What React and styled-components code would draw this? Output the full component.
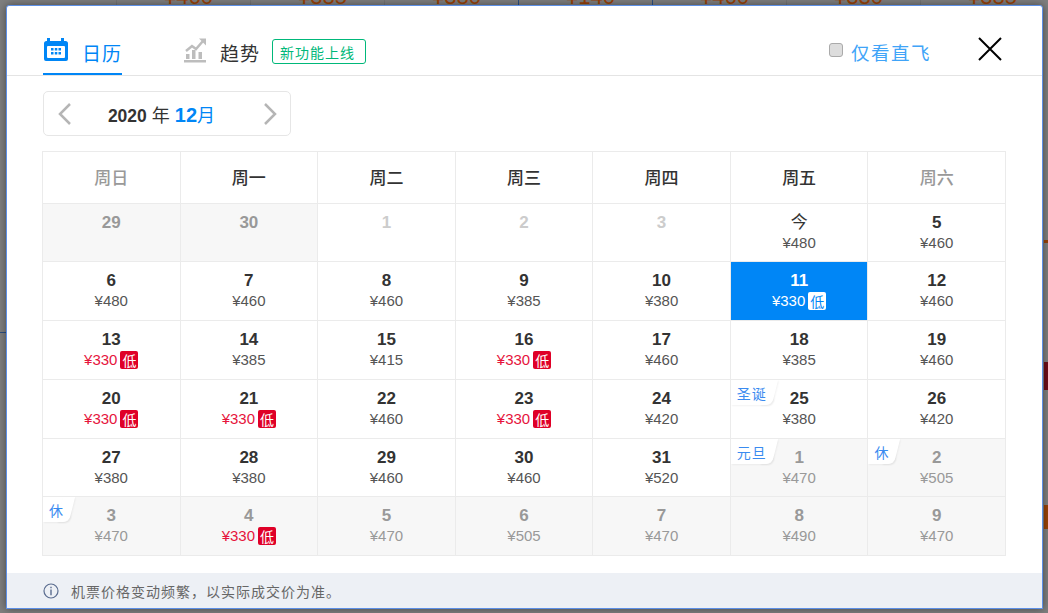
import React from "react";
import styled, { createGlobalStyle } from "styled-components";

const Global = createGlobalStyle`
  html, body {
    margin: 0;
    padding: 0;
    height: 100%;
    overflow: hidden;
    background: #7f7f7f;
    font-family: "Liberation Sans", "Noto Sans CJK SC", sans-serif;
  }
`;

const Page = styled.div`
  position: relative;
  width: 1048px;
  height: 613px;
  overflow: hidden;
  background: #7f7f7f;
`;

const PriceStrip = styled.div`
  display: flex;
  margin-left: -17px;
  margin-top: -12px;
`;

const StripCell = styled.div`
  flex: 0 0 134px;
  height: 18px;
  padding-left: 47px;
  box-sizing: border-box;
  border-right: 1px solid ${(p) => (p.$blue ? "#2c4f80" : "#747474")};
  font-size: 22px;
  line-height: 18px;
  color: #9a4208;
`;

const Scrap = styled.div`
  position: absolute;
  left: ${(p) => p.$x}px;
  top: ${(p) => p.$y}px;
  width: ${(p) => p.$w}px;
  height: ${(p) => p.$h}px;
  background: ${(p) => p.$c};
`;

const Modal = styled.div`
  position: absolute;
  left: 6px;
  top: 5px;
  width: 1037px;
  height: 604px;
  box-sizing: border-box;
  display: flex;
  flex-direction: column;
  background: #fff;
  border: 1px solid #5c8fe6;
  border-radius: 3px 3px 0 0;
  box-shadow: 0 0 8px rgba(0, 0, 0, 0.45);
`;

const Header = styled.div`
  height: 70px;
  box-sizing: border-box;
  flex: none;
  display: flex;
  align-items: flex-end;
  padding: 0 35px 0 36px;
  border-bottom: 1px solid #e4e4e4;
`;

const Tab = styled.div`
  display: flex;
  align-items: center;
  height: 44px;
  box-sizing: border-box;
  margin-right: ${(p) => p.$gap || 0}px;
  font-size: 19px;
  letter-spacing: 1px;
  color: ${(p) => (p.$active ? "#0086f6" : "#333")};
  border-bottom: 2px solid ${(p) => (p.$active ? "#0086f6" : "transparent")};
`;

const TabIcon = styled.svg`
  width: 26px;
  height: 26px;
  flex: none;
  margin-right: ${(p) => p.$gap}px;
  margin-bottom: 4px;
`;

const NewBadge = styled.span`
  margin-left: 12px;
  margin-bottom: 1px;
  height: 25px;
  box-sizing: border-box;
  padding: 0 10px 0 7px;
  display: flex;
  align-items: center;
  font-size: 14px;
  letter-spacing: 1px;
  color: #00b87a;
  border: 1px solid #00b87a;
  border-radius: 3px;
`;

const DirectOnly = styled.label`
  margin-left: auto;
  display: flex;
  align-items: center;
  height: 44px;
  padding-bottom: 3px;
  box-sizing: border-box;
  font-size: 18.5px;
  letter-spacing: 1.5px;
  color: #40a4f8;
`;

const Check = styled.input`
  appearance: none;
  width: 14px;
  height: 14px;
  margin: 0 8px 3px 0;
  background: #ddd;
  border: 1px solid #aaa;
  border-radius: 3px;
`;

const CloseIcon = styled.svg`
  width: 24px;
  height: 24px;
  margin-left: 47px;
  margin-bottom: 14px;
  margin-right: 5px;
  flex: none;
`;

const Body = styled.div`
  padding: 15px 36px 0 35px;
`;

const MonthBar = styled.div`
  width: 248px;
  height: 45px;
  margin-left: 1px;
  box-sizing: border-box;
  padding: 0 12px 0 13px;
  display: flex;
  align-items: center;
  justify-content: space-between;
  border: 1px solid #e6e6e6;
  border-radius: 5px;
`;

const Chevron = styled.svg`
  width: 15px;
  height: 24px;
  flex: none;
`;

const MonthLabel = styled.div`
  display: flex;
  align-items: baseline;
  margin-right: 12px;
  font-size: 18px;
  color: #333;
  white-space: pre;
`;

const Year = styled.b`
  font-size: 17.5px;
`;

const Month = styled.span`
  color: #0086f6;
  font-size: 18px;
  b {
    font-size: 20px;
  }
`;

const Grid = styled.div`
  margin-top: 15px;
  width: 964px;
  height: 405px;
  box-sizing: border-box;
  display: grid;
  grid-template-columns: repeat(7, 1fr);
  grid-template-rows: 52px 58px 59px 59px 59px 58px 59px;
  border-top: 1px solid #ebebeb;
  border-left: 1px solid #ebebeb;
`;

const WeekCell = styled.div`
  display: flex;
  align-items: center;
  justify-content: center;
  padding-bottom: 3px;
  border-right: 1px solid #ebebeb;
  border-bottom: 1px solid #ebebeb;
  font-size: 17px;
  font-weight: 500;
  color: ${(p) => (p.$weekend ? "#999" : "#333")};
`;

const tones = {
  normal: { bg: "#fff", day: "#333", price: "#555" },
  past: { bg: "#f7f7f7", day: "#999", price: "#999" },
  gone: { bg: "#fff", day: "#ccc", price: "#ccc" },
  next: { bg: "#f7f7f7", day: "#999", price: "#999" },
  selected: { bg: "#0086f6", day: "#fff", price: "#fff" },
};

const DayCell = styled.div`
  position: relative;
  display: flex;
  flex-direction: column;
  align-items: center;
  padding-top: 7px;
  box-sizing: border-box;
  border-right: 1px solid #ebebeb;
  border-bottom: 1px solid #ebebeb;
  background: ${(p) => tones[p.$tone].bg};
`;

const Day = styled.div`
  height: 22px;
  line-height: 23px;
  font-size: 17px;
  font-weight: ${(p) => (p.$today ? 400 : 700)};
  color: ${(p) => tones[p.$tone].day};
`;

const Price = styled.div`
  display: flex;
  align-items: center;
  height: 19px;
  font-size: 15px;
  color: ${(p) => (p.$low && p.$tone !== "selected" ? "#e6143c" : tones[p.$tone].price)};
`;

const LowBadge = styled.span`
  margin: 1px 0 0 3px;
  width: 18px;
  height: 18px;
  display: flex;
  align-items: center;
  justify-content: center;
  font-size: 14px;
  border-radius: 2px;
  color: ${(p) => (p.$tone === "selected" ? "#0086f6" : "#fff")};
  background: ${(p) => (p.$tone === "selected" ? "#fff" : "#df0027")};
`;

const HolidayTag = styled.span`
  position: absolute;
  left: 0;
  top: 0;
  height: 25px;
  padding: 0 6px;
  display: flex;
  align-items: center;
  font-size: 14px;
  letter-spacing: 1px;
  color: #3a8bf0;
  background: #fff;
  border-bottom-right-radius: 6px;
  box-shadow: 1px 1px 2px rgba(0, 0, 0, 0.05);

  &::after {
    content: "";
    position: absolute;
    top: 0;
    bottom: 0;
    right: -2px;
    width: 12px;
    background: #fff;
    transform: skewX(-14deg);
    border-bottom-right-radius: 6px;
    box-shadow: 1px 1px 2px rgba(0, 0, 0, 0.05);
  }

  em {
    position: relative;
    z-index: 1;
    font-style: normal;
  }
`;

const Footer = styled.div`
  margin-top: auto;
  height: 35px;
  flex: none;
  display: flex;
  align-items: center;
  padding-left: 36px;
  background: #edf0f5;
  font-size: 14px;
  letter-spacing: 1px;
  color: #666;
`;

const InfoIcon = styled.svg`
  width: 16px;
  height: 16px;
  margin-right: 12px;
  flex: none;
`;

const weekdays = ["周日", "周一", "周二", "周三", "周四", "周五", "周六"];

const days = [
  { d: "29", tone: "past" },
  { d: "30", tone: "past" },
  { d: "1", tone: "gone" },
  { d: "2", tone: "gone" },
  { d: "3", tone: "gone" },
  { d: "今", p: 480, today: true },
  { d: "5", p: 460 },
  { d: "6", p: 480 },
  { d: "7", p: 460 },
  { d: "8", p: 460 },
  { d: "9", p: 385 },
  { d: "10", p: 380 },
  { d: "11", p: 330, low: true, tone: "selected" },
  { d: "12", p: 460 },
  { d: "13", p: 330, low: true },
  { d: "14", p: 385 },
  { d: "15", p: 415 },
  { d: "16", p: 330, low: true },
  { d: "17", p: 460 },
  { d: "18", p: 385 },
  { d: "19", p: 460 },
  { d: "20", p: 330, low: true },
  { d: "21", p: 330, low: true },
  { d: "22", p: 460 },
  { d: "23", p: 330, low: true },
  { d: "24", p: 420 },
  { d: "25", p: 380, tag: "圣诞" },
  { d: "26", p: 420 },
  { d: "27", p: 380 },
  { d: "28", p: 380 },
  { d: "29", p: 460 },
  { d: "30", p: 460 },
  { d: "31", p: 520 },
  { d: "1", p: 470, tone: "next", tag: "元旦" },
  { d: "2", p: 505, tone: "next", tag: "休" },
  { d: "3", p: 470, tone: "next", tag: "休" },
  { d: "4", p: 330, low: true, tone: "next" },
  { d: "5", p: 470, tone: "next" },
  { d: "6", p: 505, tone: "next" },
  { d: "7", p: 470, tone: "next" },
  { d: "8", p: 490, tone: "next" },
  { d: "9", p: 470, tone: "next" },
];

const stripPrices = ["", "¥460", "¥385", "¥380", "¥140", "¥460", "¥330", "¥385"];

const App = () => {
  return (
    <Page>
      <Global />
      <PriceStrip>
        {stripPrices.map((price, i) => (
          <StripCell key={i} $blue={i === 3 || i === 4}>
            {price}
          </StripCell>
        ))}
      </PriceStrip>
      <Scrap $x={0} $y={332} $w={6} $h={1} $c="#2c4f80" />
      <Scrap $x={1044} $y={362} $w={4} $h={28} $c="#6e0c18" />
      <Scrap $x={1044} $y={505} $w={4} $h={24} $c="#9a4208" />
      <Scrap $x={1044} $y={240} $w={4} $h={3} $c="#9a4208" />

      <Modal>
        <Header>
          <Tab $active $gap={60}>
            <TabIcon $gap={13} viewBox="0 0 26 26">
              <path
                fill="#0086f6"
                d="M4 1h3v3h11V1h3v3h1.500A2.500 2.500 0 0 1 25 6.500V22a2 2 0 0 1-2 2H3a2 2 0 0 1-2-2V6.500A2.500 2.500 0 0 1 3.500 4H4z"
              />
              <rect x="4" y="9" width="18" height="12" rx="1" fill="#fff" />
              <path
                fill="#0086f6"
                d="M8 11h2.500v2.500H8zM11.800 11h2.500v2.500h-2.500zM15.500 11H18v2.500h-2.500zM8 15h2.500v2.500H8zM11.800 15h2.500v2.500h-2.500zM15.500 15H18v2.500h-2.500z"
              />
            </TabIcon>
            日历
          </Tab>
          <Tab>
            <TabIcon $gap={12} viewBox="0 0 26 26">
              <path
                fill="#bdbdbd"
                d="M2 23h22v2.500H2zM4 17h3.500v5H4zM10 13h3.500v9H10zM16.500 15H20v7h-3.500z"
              />
              <path fill="none" stroke="#bdbdbd" strokeWidth="2.500" d="M4 14l6-5 4 3 7-8" />
              <path fill="#bdbdbd" d="M17 1.500h7v7z" />
            </TabIcon>
            趋势
            <NewBadge>新功能上线</NewBadge>
          </Tab>
          <DirectOnly>
            <Check type="checkbox" readOnly />
            仅看直飞
          </DirectOnly>
          <CloseIcon viewBox="0 0 24 24">
            <path stroke="#000" strokeWidth="2" d="M1 1l22 22M23 1L1 23" />
          </CloseIcon>
        </Header>

        <Body>
          <MonthBar>
            <Chevron viewBox="0 0 15 24">
              <path fill="none" stroke="#b5b5b5" strokeWidth="2.500" d="M13 2L3 12l10 10" />
            </Chevron>
            <MonthLabel>
              <Year>2020</Year> 年 <Month><b>12</b>月</Month>
            </MonthLabel>
            <Chevron viewBox="0 0 15 24">
              <path fill="none" stroke="#b5b5b5" strokeWidth="2.500" d="M2 2l10 10L2 22" />
            </Chevron>
          </MonthBar>

          <Grid>
            {weekdays.map((w, i) => (
              <WeekCell key={w} $weekend={i === 0 || i === 6}>
                {w}
              </WeekCell>
            ))}
            {days.map((item, i) => {
              const tone = item.tone || "normal";
              return (
                <DayCell key={i} $tone={tone}>
                  {item.tag && (
                    <HolidayTag>
                      <em>{item.tag}</em>
                    </HolidayTag>
                  )}
                  <Day $tone={tone} $today={item.today}>
                    {item.d}
                  </Day>
                  {item.p && (
                    <Price $tone={tone} $low={item.low}>
                      ¥{item.p}
                      {item.low && <LowBadge $tone={tone}>低</LowBadge>}
                    </Price>
                  )}
                </DayCell>
              );
            })}
          </Grid>
        </Body>

        <Footer>
          <InfoIcon viewBox="0 0 16 16">
            <circle cx="8" cy="8" r="7" fill="none" stroke="#5a6c8f" strokeWidth="1.200" />
            <path fill="#5a6c8f" d="M7.300 3.800h1.400v1.500H7.300zM7.300 6.600h1.400v5.600H7.300z" />
          </InfoIcon>
          机票价格变动频繁，以实际成交价为准。
        </Footer>
      </Modal>
    </Page>
  );
};

export default App;
